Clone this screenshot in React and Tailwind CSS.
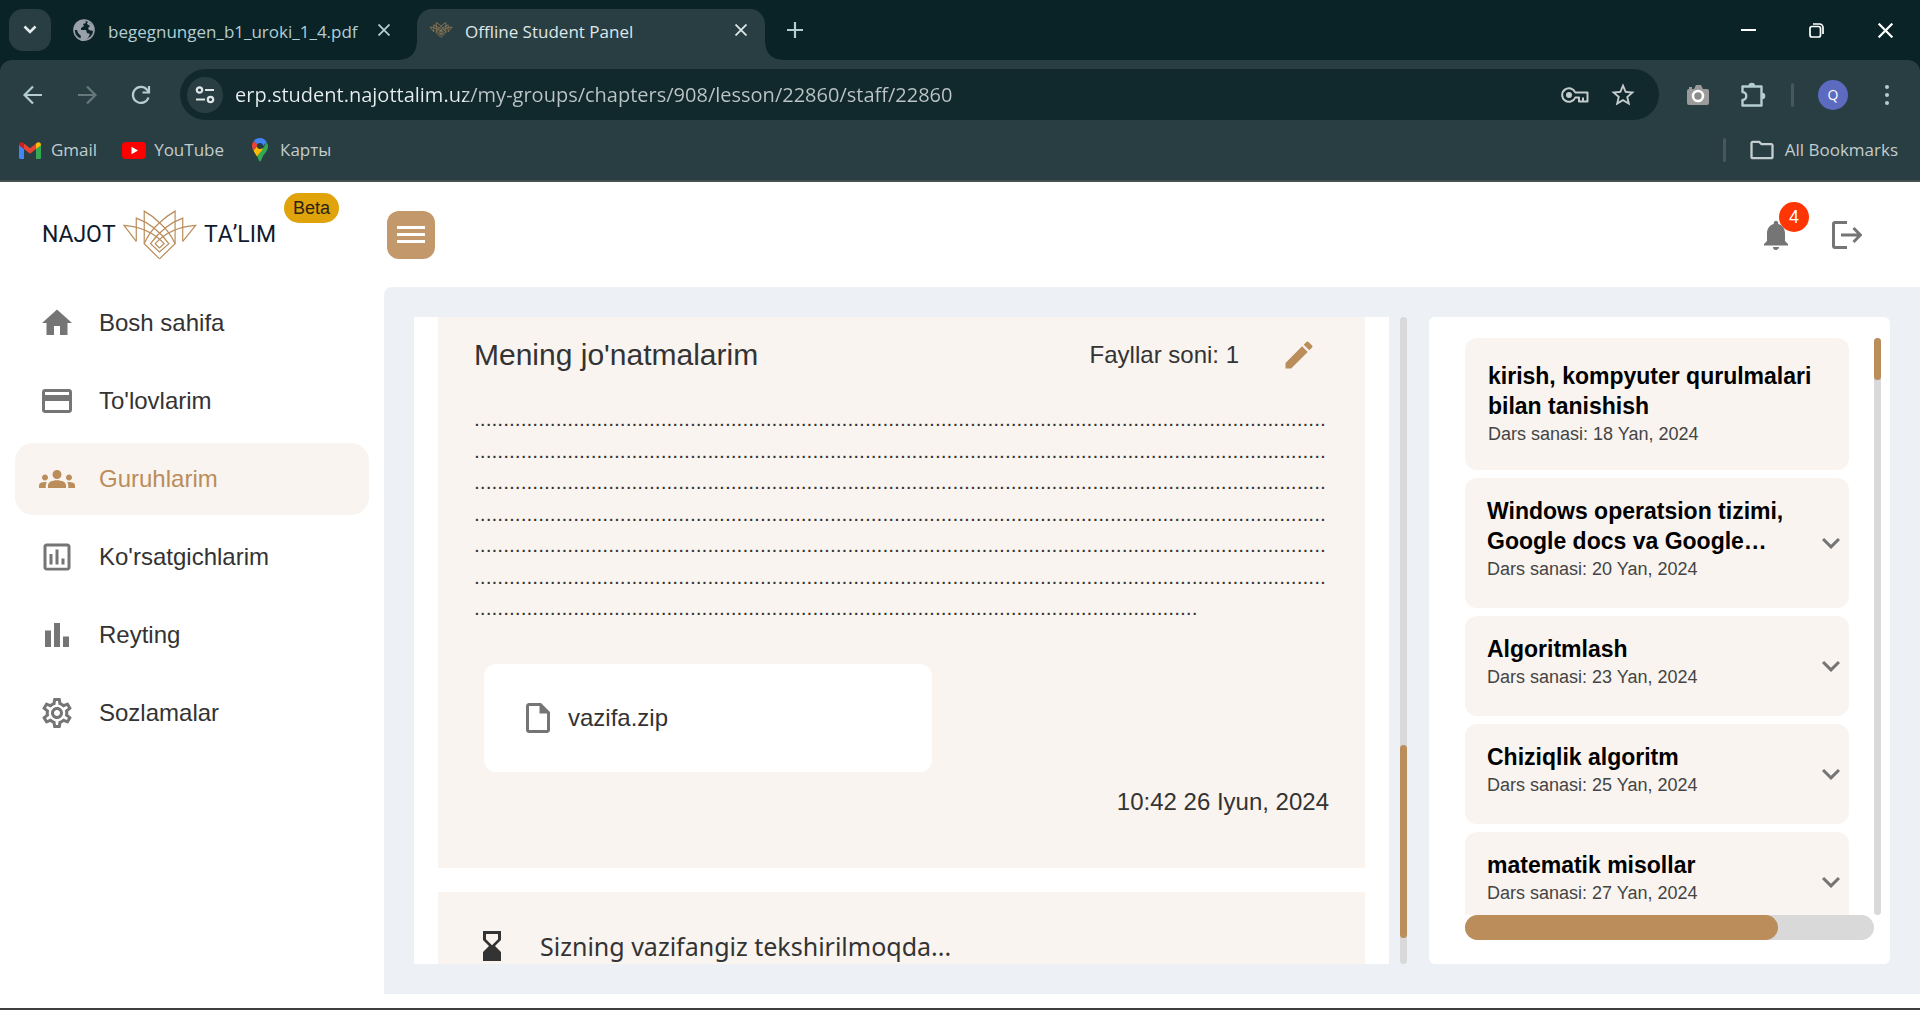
import React from "react";
import {
  MdHome,
  MdGroups,
  MdOutlineSettings,
  MdEdit,
  MdOutlineInsertDriveFile,
  MdHourglassBottom,
  MdExpandMore,
  MdNotifications,
  MdOutlineFolder,
  MdStarOutline,
} from "react-icons/md";

const CHROME_FONT = "font-['Open_Sans','Noto_Sans',sans-serif]";
const PAGE_FONT = "font-['Liberation_Sans',Arial,sans-serif]";

/* ---------- drawings ---------- */

function LotusLogo({ className, strokeWidth = 3.6 }) {
  return (
    <svg viewBox="360 88 226 156" fill="none" stroke="#BA8D5B" strokeWidth={strokeWidth} className={className} aria-hidden="true">
      <path d="M473 238 427 192V94Q452 108 473 129Q502 154 520 192" />
      <path d="M473 238 520 192V94Q495 108 473 129Q444 154 427 192" />
      <path d="M403 185V115Q460 135 501 192L473 217 446 192Q487 135 543 115V185" />
      <path d="M403 185 366 137Q440 142 487 192L473 205 460 192Q506 142 582 137L543 185" />
    </svg>
  );
}

function GlobeIcon() {
  return (
    <svg viewBox="0 0 22 22" className="size-[22px]" aria-hidden="true">
      <circle cx="11" cy="11" r="10" fill="#0a2327" stroke="#9aa0a9" strokeWidth="1.6" />
      <path fill="#9aa0a9" d="M1 11C1 5 5 1 12 1l1 3-3 1 1 2-3 2v2h5l1 3 3 1-2 4-4 3c-2 0-3 0-4-1l1-4-3-3-1-3zM15 2l5 5v5l-4-1-1-2 2-2-3-2z" />
    </svg>
  );
}

function CloseIcon({ className }) {
  return (
    <svg viewBox="0 0 12 12" fill="none" stroke="currentColor" strokeWidth="1.8" className={className} aria-hidden="true">
      <path d="M.5.5l11 11M11.500.5.5 11.500" />
    </svg>
  );
}

function TuneIcon() {
  return (
    <svg viewBox="0 0 20 18" fill="none" stroke="#dfe6e8" strokeWidth="2.2" className="h-[18px] w-5" aria-hidden="true">
      <circle cx="4.5" cy="4" r="2.7" />
      <path d="M10 4h9M1 13.500h9" />
      <circle cx="15.500" cy="13.500" r="2.700" />
    </svg>
  );
}

function ArrowIcon({ right }) {
  return (
    <svg viewBox="0 0 20 20" fill="none" stroke="currentColor" strokeWidth="2.2" className="size-5" aria-hidden="true">
      {right ? <path d="M1 10h17M10 1.500 18.500 10 10 18.500" /> : <path d="M19 10H2M10 1.500 1.500 10 10 18.500" />}
    </svg>
  );
}

function ReloadIcon() {
  return (
    <svg viewBox="0 0 20 20" fill="none" stroke="currentColor" strokeWidth="2.2" className="size-5" aria-hidden="true">
      <path d="M17.500 12.500A8 8 0 1 1 16 4.700L18 7" />
      <path d="M18 1v6.500h-6.500" />
    </svg>
  );
}

function KeyIcon() {
  return (
    <svg viewBox="0 0 28 16" className="h-4 w-7" aria-hidden="true">
      <path
        fill="none"
        stroke="currentColor"
        strokeWidth="2"
        strokeLinejoin="round"
        d="M14.300 5.500A6.800 6.800 0 1 0 14.300 10.500H18V14.500H26.500V5.500zM22 14.500V10.500"
      />
      <circle cx="8" cy="8" r="3" fill="currentColor" />
    </svg>
  );
}

function CameraIcon() {
  return (
    <svg viewBox="0 0 24 22" className="h-[22px] w-6" aria-hidden="true">
      <path fill="#9b9b9b" d="M3 5V3h3v2h2l2-4h5l2 4h4a2 2 0 0 1 2 2v12a2 2 0 0 1-2 2H3a2 2 0 0 1-2-2V7a2 2 0 0 1 2-2z" />
      <circle cx="12" cy="12" r="5" fill="#8a8a8a" stroke="#fff" strokeWidth="2.6" />
    </svg>
  );
}

function PuzzleIcon() {
  return (
    <svg viewBox="0 0 26 26" className="size-[26px]" aria-hidden="true">
      <path fill="none" stroke="#b4cdd3" strokeWidth="2.400" strokeLinejoin="round" d="M2.500 4.500h19v19h-19v-5.500c5 0 5-8 0-8z" />
      <path fill="#b4cdd3" d="M8.500 4a3.300 3.300 0 0 1 6.600 0zM22 10.700a3.300 3.300 0 0 1 0 6.600z" />
    </svg>
  );
}

function GmailIcon() {
  return (
    <svg viewBox="0 0 22 17" className="h-[17px] w-[22px]" aria-hidden="true">
      <path fill="#4285F4" d="M0 3l5 3.700V17H1.500A1.500 1.500 0 0 1 0 15.500z" />
      <path fill="#34A853" d="M22 3l-5 3.700V17h3.500a1.500 1.500 0 0 0 1.500-1.500z" />
      <path fill="#EA4335" d="M5 1.500l6 4.700 6-4.700v5.500l-6 4.700L5 7z" />
      <path fill="#C5221F" d="M0 3C0 .5 2.500-.7 5 1.500V7L0 3.300z" />
      <path fill="#FBBC04" d="M22 3c0-2.500-2.500-3.700-5-1.500V7l5-3.700z" />
    </svg>
  );
}

function YouTubeIcon() {
  return (
    <svg viewBox="0 0 24 17" className="h-[17px] w-6" aria-hidden="true">
      <rect width="24" height="17" rx="4" fill="#f00" />
      <path fill="#fff" d="M9.500 4.800l6.500 3.700-6.500 3.700z" />
    </svg>
  );
}

function MapPinIcon() {
  return (
    <svg viewBox="0 0 16 24" className="h-6 w-4" aria-hidden="true">
      <path fill="#34A853" d="M16 8c0 5-3 6.500-5.200 10.500C9.500 20.800 9.300 23.500 8 23.500S6.500 20.800 5.200 18.500L14.800 4.500c.8 1 1.200 2.200 1.200 3.500z" />
      <path fill="#FBBC04" d="M1.400 12.600 6 7l5 4-6 7.500C4 16.500 2.400 14.800 1.400 12.600z" />
      <path fill="#EA4335" d="M0 8c0-2 .7-3.700 1.800-5L6 6.500 1.400 12.600C.6 11.200 0 9.700 0 8z" />
      <path fill="#4285F4" d="M1.800 3C3.200 1.200 5.400 0 8 0c3 0 5.500 1.700 6.800 4.300L10 9 5 6z" />
      <circle cx="8" cy="8" r="3" fill="#263c40" />
    </svg>
  );
}

function CardIcon() {
  return (
    <svg viewBox="0 0 24 24" fill="currentColor" className="size-9" aria-hidden="true">
      <path d="M20 4H4c-1.110 0-1.990.890-1.990 2L2 18c0 1.110.890 2 2 2h16c1.110 0 2-.890 2-2V6c0-1.110-.890-2-2-2zm0 14H4v-6h16v6zm0-10H4V6h16v2z" />
    </svg>
  );
}

function ChartBoxIcon() {
  return (
    <svg viewBox="0 0 24 24" fill="currentColor" className="size-9" aria-hidden="true">
      <path d="M9 17H7v-7h2v7zm4 0h-2V7h2v10zm4 0h-2v-4h2v4zm2 2.100H5V5h14v14.100zm0-16.100H5c-1.100 0-2 .9-2 2v14c0 1.100.9 2 2 2h14c1.100 0 2-.9 2-2V5c0-1.100-.9-2-2-2z" />
    </svg>
  );
}

function BarsIcon() {
  return (
    <svg viewBox="0 0 24 24" fill="currentColor" className="size-9" aria-hidden="true">
      <path d="M4 9h4v11H4zm12 4h4v7h-4zm-6-9h4v16h-4z" />
    </svg>
  );
}

function LogoutIcon() {
  return (
    <svg viewBox="0 0 30 28" fill="none" stroke="currentColor" strokeWidth="3" className="h-7 w-[30px]" aria-hidden="true">
      <path d="M15 1.500H3Q1.500 1.500 1.500 3v22q0 1.500 1.500 1.500h12" />
      <path d="M9 14h19M21.500 7 28.500 14l-7 7" />
    </svg>
  );
}

/* ---------- browser frame ---------- */

function TabStrip() {
  return (
    <div className="flex h-15 items-stretch bg-[#0a2327] text-[#b4cdd3]">
      <button aria-label="Search tabs" className="my-[9px] ml-[9px] flex size-[42px] items-center justify-center rounded-[14px] bg-[#283e42] text-[#e4ecee]">
        <svg viewBox="0 0 14 10" fill="none" stroke="currentColor" strokeWidth="2.600" className="h-2.5 w-3.5" aria-hidden="true">
          <path d="M1.500 1.500 7 7l5.500-5.500" />
        </svg>
      </button>
      <div className="ml-[22px] flex w-[328px] items-center pr-[11px]">
        <GlobeIcon />
        <span className="ml-[13px] flex-1 pt-[3px] text-[17px] whitespace-nowrap">begegnungen_b1_uroki_1_4.pdf</span>
        <button aria-label="Close tab"><CloseIcon className="size-3" /></button>
      </div>
      <div className="flex items-end">
        <span className="size-4 bg-[radial-gradient(circle_at_0_0,transparent_15px,#283e42_16px)]" />
        <div className="mt-[9px] flex h-[51px] w-[348px] items-center rounded-t-[15px] bg-[#283e42] px-3 pb-[9px] text-[#dfe6e8]">
          <LotusLogo strokeWidth={8} className="h-4 w-6 opacity-75" />
          <span className="ml-3 flex-1 pt-[3px] text-[17px] whitespace-nowrap">Offline Student Panel</span>
          <button aria-label="Close tab" className="mr-1.5"><CloseIcon className="size-3" /></button>
        </div>
        <span className="size-4 bg-[radial-gradient(circle_at_100%_0,transparent_15px,#283e42_16px)]" />
      </div>
      <button aria-label="New tab" className="ml-1.5 flex w-8 items-center">
        <svg viewBox="0 0 16 16" stroke="currentColor" strokeWidth="2.200" className="size-4" aria-hidden="true">
          <path d="M8 0v16M0 8h16" />
        </svg>
      </button>
      <div className="ml-auto flex items-center pr-[27px] text-white">
        <button aria-label="Minimize" className="w-[68px]"><span className="block h-0.5 w-[15px] bg-white" /></button>
        <button aria-label="Restore" className="w-[69px]">
          <svg viewBox="0 0 15 15" fill="none" stroke="currentColor" strokeWidth="1.700" className="size-[15px]" aria-hidden="true">
            <rect x="1" y="3.500" width="10.500" height="10.500" rx="2" />
            <path d="M4 1h6.500A3.500 3.500 0 0 1 14 4.500V11" />
          </svg>
        </button>
        <button aria-label="Close">
          <CloseIcon className="size-[15px]" />
        </button>
      </div>
    </div>
  );
}

function Toolbar() {
  return (
    <div className="bg-[#0a2327]">
      <div className="flex h-[69px] items-center rounded-t-xl bg-[#283e42] text-[#b4cdd3]">
        <button aria-label="Back" className="ml-[23px]"><ArrowIcon /></button>
        <button aria-label="Forward" className="ml-[34px] text-[#67787c]"><ArrowIcon right /></button>
        <button aria-label="Reload" className="ml-[34px]"><ReloadIcon /></button>
        <div className="ml-[29px] flex h-[51px] flex-1 items-center rounded-full bg-[#11292d] pr-[22px] pl-[7px] text-[#c5cbcd]">
          <button aria-label="Site information" className="flex size-9 items-center justify-center rounded-full bg-[#283e42]"><TuneIcon /></button>
          <input
            aria-label="Address"
            defaultValue="erp.student.najottalim.uz/my-groups/chapters/908/lesson/22860/staff/22860"
            className="ml-3 min-w-0 flex-1 bg-[linear-gradient(90deg,#e8eeef_230px,#bdc5c7_230px)] bg-clip-text text-[20px] text-transparent outline-none"
          />
          <button aria-label="Saved passwords"><KeyIcon /></button>
          <button aria-label="Bookmark this page" className="ml-5"><MdStarOutline className="size-7" /></button>
        </div>
        <div className="flex items-center">
          <button aria-label="Screenshot extension" className="ml-[27px]"><CameraIcon /></button>
          <button aria-label="Extensions" className="ml-[30px]"><PuzzleIcon /></button>
          <span className="ml-[25px] h-6 w-[3px] rounded-full bg-[#44585d]" />
          <button aria-label="Profile" className="ml-6 flex size-[30px] items-center justify-center rounded-full bg-[#5c6bc0] text-sm text-white">Q</button>
          <button aria-label="Menu" className="mr-[31px] ml-[37px]">
            <svg viewBox="0 0 4 22" fill="currentColor" className="h-[22px] w-1" aria-hidden="true">
              <circle cx="2" cy="3" r="2" /><circle cx="2" cy="11" r="2" /><circle cx="2" cy="19" r="2" />
            </svg>
          </button>
        </div>
      </div>
    </div>
  );
}

function BookmarksBar() {
  return (
    <nav aria-label="Bookmarks" className="flex h-[53px] items-center border-b-2 border-[#47504f] bg-[#283e42] pr-[22px] pb-[9px] pl-[19px] text-[17px] text-[#c3ccce]">
      <a href="#gmail" className="flex items-center gap-[10px]"><GmailIcon />Gmail</a>
      <a href="#youtube" className="ml-[25px] flex items-center gap-2"><YouTubeIcon />YouTube</a>
      <a href="#maps" className="ml-7 flex items-center gap-3"><MapPinIcon />Карты</a>
      <span className="ml-auto h-6 w-[3px] rounded-full bg-[#44585d]" />
      <button className="ml-[22px] flex items-center gap-[9px]">
        <MdOutlineFolder className="size-7" />All Bookmarks
      </button>
    </nav>
  );
}

/* ---------- page ---------- */

const NAV = [
  { label: "Bosh sahifa", icon: <MdHome className="size-9" /> },
  { label: "To'lovlarim", icon: <CardIcon /> },
  { label: "Guruhlarim", icon: <MdGroups className="size-9" />, active: true },
  { label: "Ko'rsatgichlarim", icon: <ChartBoxIcon /> },
  { label: "Reyting", icon: <BarsIcon /> },
  { label: "Sozlamalar", icon: <MdOutlineSettings className="size-9" /> },
];

function Sidebar() {
  return (
    <aside className="w-96 shrink-0">
      <div className="flex h-[105px] items-start pl-[42px]">
        <a href="#home" aria-label="Najot Ta'lim" className="flex w-[234px] items-center justify-between pt-[27px] font-['Roboto',sans-serif] text-[23px] text-[#0f1b2d] [font-kerning:none]">
          <span>NAJOT</span>
          <LotusLogo className="h-[52px] w-[75px]" />
          <span>TA’LIM</span>
        </a>
        <span className="mt-[11px] ml-2 flex h-[30px] items-center rounded-full bg-[#e0a30a] px-[9px] text-lg text-[#2b2416]">Beta</span>
      </div>
      <nav className="flex flex-col gap-1.5 px-[15px]">
        {NAV.map((item) => (
          <a
            key={item.label}
            href="#nav"
            className={
              "flex h-[72px] items-center gap-6 rounded-[18px] px-6 text-2xl " +
              (item.active ? "bg-[#f9f4f0] text-[#ba8d5b]" : "text-[#333]")
            }
          >
            <span className={item.active ? "text-[#ba8d5b]" : "text-[#757575]"}>{item.icon}</span>
            {item.label}
          </a>
        ))}
      </nav>
    </aside>
  );
}

function Header() {
  return (
    <header className="flex h-[105px] items-center justify-between pr-[58px] pl-[3px]">
      <button aria-label="Toggle menu" className="flex size-12 items-center justify-center rounded-xl bg-[#c3986a]">
        <svg viewBox="0 0 28 18" stroke="#fff" strokeWidth="2.800" className="h-[18px] w-7" aria-hidden="true">
          <path d="M0 1.500h28M0 8.500h28M0 15.500h28" />
        </svg>
      </button>
      <div className="flex items-center gap-[38px] text-[#757575]">
        <button aria-label="Notifications" className="relative">
          <MdNotifications className="size-9" />
          <span className="absolute -top-[15px] left-[21px] flex size-[30px] items-center justify-center rounded-full bg-[#ff3503] text-lg text-white">4</span>
        </button>
        <button aria-label="Log out"><LogoutIcon /></button>
      </div>
    </header>
  );
}

const ANSWER = ".".repeat(1000);

function Submission() {
  return (
    <section className="min-w-0 flex-1 overflow-hidden bg-white px-6 text-[#333]">
      <article className="bg-[#f9f4f0] px-9 pb-12">
        <div className="flex h-19 items-center pr-3">
          <h2 className="flex-1 text-[30px] leading-10">Mening jo'natmalarim</h2>
          <span className="mr-[42px] text-2xl">Fayllar soni: 1</span>
          <button aria-label="Edit" className="text-[#ba8d5b]"><MdEdit className="size-9" /></button>
        </div>
        <p className="mt-2.5 text-[21px] leading-normal wrap-anywhere [line-break:anywhere]">{ANSWER}</p>
        <a href="#file" className="mt-10 ml-2.5 flex h-[108px] w-[448px] items-center gap-3 rounded-xl bg-white px-9 text-2xl">
          <MdOutlineInsertDriveFile className="size-9 text-[#757575]" />
          vazifa.zip
        </a>
        <p className="mt-3 text-right text-2xl leading-9">10:42 26 Iyun, 2024</p>
      </article>
      <article className="mt-6 flex items-center gap-[30px] bg-[#f9f4f0] px-9 py-9">
        <MdHourglassBottom className="size-9" />
        <p className="font-['Noto_Sans',sans-serif] text-[25px] leading-8">Sizning vazifangiz tekshirilmoqda...</p>
      </article>
    </section>
  );
}

const LESSONS = [
  { title: "Windows operatsion tizimi, Google docs va Google…", date: "20 Yan, 2024" },
  { title: "Algoritmlash", date: "23 Yan, 2024" },
  { title: "Chiziqlik algoritm", date: "25 Yan, 2024" },
  { title: "matematik misollar", date: "27 Yan, 2024" },
];

function LessonText({ title, date }) {
  return (
    <span className="block min-w-0 flex-1">
      <span className="block text-[23px] leading-[30px] font-bold text-black">{title}</span>
      <span className="block text-lg leading-[27px] text-[#444]">Dars sanasi: {date}</span>
    </span>
  );
}

function Lessons() {
  return (
    <section className="flex w-[461px] shrink-0 flex-col rounded-md bg-white pt-[21px] pr-[9px] pb-6 pl-9">
      <div className="flex min-h-0 flex-1 justify-between">
        <div className="flex w-96 flex-col gap-2 overflow-hidden">
          <button className="flex shrink-0 rounded-xl bg-[#f9f4f0] pt-[23px] pr-6 pb-[22px] pl-[23px] text-left">
            <LessonText title="kirish, kompyuter qurulmalari bilan tanishish" date="18 Yan, 2024" />
          </button>
          {LESSONS.map((lesson) => (
            <button key={lesson.title} className="flex shrink-0 items-center rounded-xl bg-[#f9f4f0] pl-[22px] text-left">
              <span className="flex-1 pt-[18px] pb-[25px]"><LessonText {...lesson} /></span>
              <MdExpandMore className="ml-3 size-9 text-[#757575]" />
            </button>
          ))}
        </div>
        <div className="w-[7px] rounded-full bg-[#d9d9d9]">
          <div className="h-[42px] rounded-full bg-[#ba8d5b]" />
        </div>
      </div>
      <div className="mr-[7px] h-[25px] rounded-full bg-[#d9d9d9]">
        <div className="h-full w-[313px] rounded-full bg-[#ba8d5b]" />
      </div>
    </section>
  );
}

export default function App() {
  return (
    <div className={"flex h-screen flex-col overflow-hidden bg-white " + PAGE_FONT}>
      <div className={"shrink-0 " + CHROME_FONT}>
        <TabStrip />
        <Toolbar />
        <BookmarksBar />
      </div>
      <div className="flex min-h-0 flex-1">
        <Sidebar />
        <div className="flex min-w-0 flex-1 flex-col">
          <Header />
          <main className="flex min-h-0 flex-1 rounded-tl-lg bg-[#edf1f6] p-[30px]">
            <Submission />
            <div className="mr-[22px] ml-[11px] flex w-[7px] flex-col rounded-full bg-[#d9d9d9]">
              <div className="mt-auto mb-[26px] h-[193px] rounded-full bg-[#ba8d5b]" />
            </div>
            <Lessons />
          </main>
        </div>
      </div>
      <div className="mt-3.5 h-0.5 shrink-0 bg-[#3f3f3f]" />
    </div>
  );
}
